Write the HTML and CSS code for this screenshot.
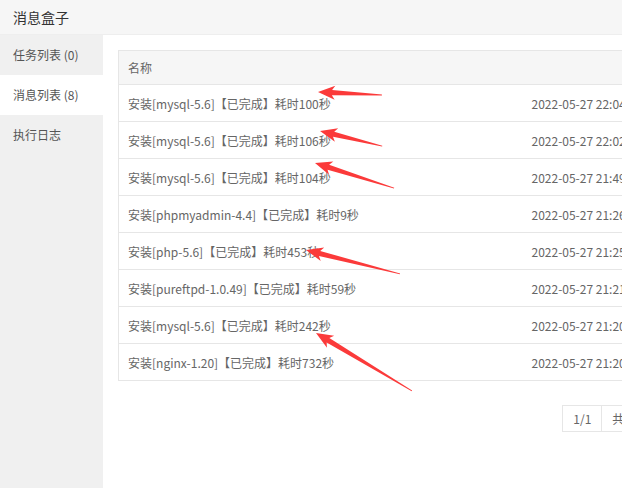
FILE: index.html
```html
<!DOCTYPE html>
<html lang="zh-CN">
<head>
  <meta charset="UTF-8" />
  <meta name="viewport" content="width=device-width, initial-scale=1.0"/>
  <title>消息盒子</title>
  <link rel="stylesheet" href="styles.css">
</head>
<body>
  <div class="msg-box">
    <div class="box-title">消息盒子</div>

    <div class="box-body">
      <ul class="tabs">
        <li>任务列表 (0)</li>
        <li class="active">消息列表 (8)</li>
        <li>执行日志</li>
      </ul>

      <div class="panel">
        <table class="msg-table">
          <thead>
            <tr>
              <th class="col-name">名称</th>
              <th></th>
            </tr>
          </thead>
          <tbody>
            <tr><td>安装[mysql-5.6]【已完成】耗时100秒</td><td>2022-05-27 22:04:31</td></tr>
            <tr><td>安装[mysql-5.6]【已完成】耗时106秒</td><td>2022-05-27 22:02:45</td></tr>
            <tr><td>安装[mysql-5.6]【已完成】耗时104秒</td><td>2022-05-27 21:49:12</td></tr>
            <tr><td>安装[phpmyadmin-4.4]【已完成】耗时9秒</td><td>2022-05-27 21:26:03</td></tr>
            <tr><td>安装[php-5.6]【已完成】耗时453秒</td><td>2022-05-27 21:25:54</td></tr>
            <tr><td>安装[pureftpd-1.0.49]【已完成】耗时59秒</td><td>2022-05-27 21:21:37</td></tr>
            <tr><td>安装[mysql-5.6]【已完成】耗时242秒</td><td>2022-05-27 21:20:38</td></tr>
            <tr><td>安装[nginx-1.20]【已完成】耗时732秒</td><td>2022-05-27 21:20:05</td></tr>
          </tbody>
        </table>

        <div class="pager">
          <span>1/1</span>
          <span>共8条数据</span>
        </div>
      </div>
    </div>

    <!-- red annotation arrows drawn over the screenshot -->
    <svg class="marks" width="622" height="488" viewBox="0 0 622 488">
      <g fill="#fb3a3a">
        <polygon transform="translate(318 92) rotate(2.7)" points="0,0 17,-7 14,-2.6 64,-0.4 64,0.4 14,2.6 17,7" />
        <polygon transform="translate(320 131) rotate(13.6)" points="0,0 17,-7 14,-2.6 64,-0.4 64,0.4 14,2.6 17,7" />
        <polygon transform="translate(315 163) rotate(17.6)" points="0,0 17,-7 14,-2.6 83,-0.4 83,0.4 14,2.6 17,7" />
        <polygon transform="translate(306 250) rotate(14.3)" points="0,0 17,-7 14,-2.6 97,-0.4 97,0.4 14,2.6 17,7" />
        <polygon transform="translate(316 333) rotate(31.1)" points="0,0 17,-7 14,-2.6 112,-0.4 112,0.4 14,2.6 17,7" />
      </g>
    </svg>
  </div>
</body>
</html>
```

FILE: styles.css
```css
* {
  box-sizing: border-box;
}

body {
  margin: 0;
  overflow: hidden;
  font-family: "Microsoft YaHei", "Noto Sans CJK SC", sans-serif;
  font-size: 12px;
  color: #666;
  background: #fff;
}

.msg-box {
  position: relative;
  width: 700px;
  height: 100vh;
  display: flex;
  flex-direction: column;
}

.box-title {
  height: 35px;
  line-height: 34px;
  padding-left: 13px;
  font-size: 14px;
  color: #333;
  background: #f6f6f6;
  border-bottom: 1px solid #eee;
}

.box-body {
  flex: 1;
  display: flex;
}

.tabs {
  width: 103px;
  margin: 0;
  padding: 0;
  list-style: none;
  background: #f0f0f0;
}

.tabs li {
  height: 40px;
  line-height: 40px;
  padding-left: 13px;
  color: #555;
  font-size: 12px;
}

.tabs li.active {
  background: #fff;
}

.panel {
  flex: 1;
  padding: 15px;
}

.msg-table {
  width: 560px;
  border-collapse: collapse;
  border: 1px solid #e6e6e6;
}

.msg-table th,
.msg-table td {
  padding: 0 9px;
  text-align: left;
  font-weight: normal;
  border-bottom: 1px solid #e6e6e6;
  white-space: nowrap;
}

.msg-table th {
  height: 34px;
  background: #f6f6f6;
  color: #666;
}

.msg-table td {
  height: 37px;
  color: #666;
}

.msg-table .col-name {
  width: 404px;
}

.pager {
  display: flex;
  justify-content: flex-end;
  width: 560px;
  margin-top: 24px;
}

.pager span {
  height: 27px;
  line-height: 25px;
  padding: 0 10px;
  border: 1px solid #e6e6e6;
  color: #666;
  font-size: 12px;
}

.pager span + span {
  border-left: none;
}

.marks {
  position: absolute;
  top: 0;
  left: 0;
  pointer-events: none;
}
```
